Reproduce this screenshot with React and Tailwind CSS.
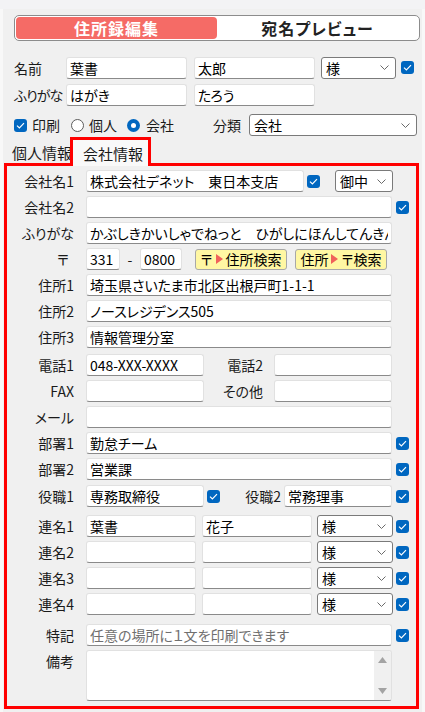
import React from 'react';

// Shared bits for the Windows-style form controls
function Check({ className = '' }) {
    return (
        <span className={`flex h-[13px] w-[13px] shrink-0 items-center justify-center rounded-[3px] bg-[#0067c0] ${className}`}>
            <svg width="9" height="7" viewBox="0 0 9 7">
                <path d="M1 3.6 3.4 6 8 1.2" fill="none" stroke="#ffffff" strokeWidth="1.2" />
            </svg>
        </span>
    );
}

function Radio({ checked, className = '' }) {
    return checked ? (
        <span className={`flex h-[13px] w-[13px] shrink-0 items-center justify-center rounded-full bg-[#0067c0] ${className}`}>
            <span className="h-[5px] w-[5px] rounded-full bg-white" />
        </span>
    ) : (
        <span className={`block h-[13px] w-[13px] shrink-0 rounded-full border border-[#5c5c5c] bg-white ${className}`} />
    );
}

function Field({ className = '', value = '', placeholder }) {
    return (
        <input
            readOnly
            value={value}
            placeholder={placeholder}
            className={`h-[22px] shrink-0 rounded-[3px] border border-[#e1e1e1] border-b-[#8a8a8a] bg-white px-[3px] text-[14px] text-black outline-none placeholder:text-[#6f6f6f] ${className}`}
        />
    );
}

function Select({ className = '', value }) {
    return (
        <div className={`flex h-[22px] shrink-0 items-center justify-between rounded-[3px] border border-[#7a7a7a] bg-white pl-[4px] pr-[6px] text-[14px] text-black ${className}`}>
            <span>{value}</span>
            <svg width="9" height="5" viewBox="0 0 9 5">
                <path d="M0.5 0.5 4.5 4.5 8.5 0.5" fill="none" stroke="#6a6a6a" strokeWidth="1" />
            </svg>
        </div>
    );
}

function Arrow() {
    return (
        <svg width="7" height="10" viewBox="0 0 7 10" className="mx-[3px]">
            <path d="M0 0 7 5 0 10Z" fill="#f0615a" />
        </svg>
    );
}

function Row({ label, className = '', top, children }) {
    return (
        <div className={`flex ${top ? 'items-start' : 'h-[22px] items-center'} ${className}`}>
            <div className={`w-[67px] shrink-0 text-right text-[14px] text-[#1a1a1a] ${top ? 'pt-[4px]' : ''}`}>{label}</div>
            <div className="ml-[12px] flex items-center">{children}</div>
        </div>
    );
}

export default function App() {
    return (
        <div className="flex h-[712px] w-[425px] flex-col overflow-hidden whitespace-nowrap bg-[#f0f0f0] font-['Noto_Sans_CJK_JP','Noto_Sans',sans-serif] leading-none text-[#1a1a1a] [font-feature-settings:'palt']">
            <div className="h-[9px] shrink-0 bg-[#f3f3f5]" />
            <div className="flex flex-1">
                <div className="w-[3px] bg-[#f8f8f8]" />
                <div className="flex flex-1 flex-col">
                    {/* Mode switch */}
                    <div className="ml-[11px] mr-[2px] mt-[6px] flex h-[26px] rounded-[5px] border border-[#8c8c8c] bg-white p-[1px]">
                        <div className="flex w-[201px] items-center justify-center rounded-[4px] bg-[#f56b66] text-[16px] font-bold tracking-[1px] text-white">住所録編集</div>
                        <div className="flex flex-1 items-center justify-center text-[16px] font-bold tracking-[1px] text-[#222]">宛名プレビュー</div>
                    </div>

                    {/* Name */}
                    <div className="ml-[11px] mt-[15px] flex h-[23px] items-center">
                        <div className="w-[52px] text-[14px]">名前</div>
                        <Field className="w-[121px]" value="葉書" />
                        <Field className="ml-[7px] w-[121px]" value="太郎" />
                        <Select className="ml-[6px] w-[75px]" value="様" />
                        <Check className="ml-[5px]" />
                    </div>
                    <div className="ml-[11px] mt-[5px] flex h-[22px] items-center">
                        <div className="w-[52px] text-[14px] tracking-[-1px]">ふりがな</div>
                        <Field className="w-[121px]" value="はがき" />
                        <Field className="ml-[7px] w-[121px]" value="たろう" />
                    </div>

                    {/* Print / type */}
                    <div className="ml-[11px] mt-[8px] flex h-[22px] items-center text-[14px]">
                        <div className="flex w-[199px] items-center">
                            <Check />
                            <span className="ml-[5px]">印刷</span>
                            <Radio className="ml-[11px]" />
                            <span className="ml-[5px]">個人</span>
                            <Radio checked className="ml-[10px]" />
                            <span className="ml-[6px]">会社</span>
                        </div>
                        <div className="w-[36px]">分類</div>
                        <Select className="w-[168px]" value="会社" />
                    </div>

                    {/* Tabs */}
                    <div className="ml-[1px] mt-[1px] flex h-[26px] items-start">
                        <div className="flex h-[26px] w-[66px] items-center pl-[8px] pt-[4px] text-[15px]">個人情報</div>
                        <div className="relative z-10 flex h-[29px] w-[81px] items-center border-[3px] border-b-0 border-[#ff0000] bg-[#f9f9f9] pl-[10px] text-[15px]">会社情報</div>
                    </div>

                    {/* Company panel */}
                    <div className="mb-[3px] ml-[1px] mr-[3px] flex flex-col gap-[4px] border-[3px] border-[#ff0000] pb-[5px] pt-[4px]">
                        <Row label="会社名1">
                            <Field className="w-[218px]" value="株式会社デネット　東日本支店" />
                            <Check className="ml-[3px]" />
                            <Select className="ml-[15px] w-[58px]" value="御中" />
                        </Row>
                        <Row label="会社名2">
                            <Field className="w-[306px]" />
                            <Check className="ml-[4px]" />
                        </Row>
                        <Row label="ふりがな">
                            <Field className="w-[306px]" value="かぶしきかいしゃでねっと　ひがしにほんしてんきんたい" />
                        </Row>
                        <Row label={<span className="pr-[5px]">〒</span>}>
                            <Field className="w-[34px]" value="331" />
                            <span className="flex w-[20px] justify-center text-[14px]">-</span>
                            <Field className="w-[42px]" value="0800" />
                            <button className="ml-[13px] flex h-[21px] w-[92px] items-center justify-center rounded-[3px] border border-[#a8a8a8] bg-[#fff7a3] text-[14px] text-black">
                                〒<Arrow />住所検索
                            </button>
                            <button className="ml-[8px] flex h-[21px] w-[92px] items-center justify-center rounded-[3px] border border-[#a8a8a8] bg-[#fff7a3] text-[14px] text-black">
                                住所<Arrow />〒検索
                            </button>
                        </Row>
                        <Row label="住所1">
                            <Field className="w-[306px]" value="埼玉県さいたま市北区出根戸町1-1-1" />
                        </Row>
                        <Row label="住所2">
                            <Field className="w-[306px]" value="ノースレジデンス505" />
                        </Row>
                        <Row label="住所3">
                            <Field className="w-[306px]" value="情報管理分室" />
                        </Row>
                        <Row label="電話1" className="mt-[2px]">
                            <Field className="w-[118px]" value="048-XXX-XXXX" />
                            <div className="w-[59px] text-right text-[14px]">電話2</div>
                            <Field className="ml-[11px] w-[118px]" />
                        </Row>
                        <Row label="FAX">
                            <Field className="w-[118px]" />
                            <div className="w-[59px] text-right text-[14px]">その他</div>
                            <Field className="ml-[11px] w-[118px]" />
                        </Row>
                        <Row label="メール">
                            <Field className="w-[306px]" />
                        </Row>
                        <Row label="部署1">
                            <Field className="w-[306px]" value="勤怠チーム" />
                            <Check className="ml-[4px]" />
                        </Row>
                        <Row label="部署2">
                            <Field className="w-[306px]" value="営業課" />
                            <Check className="ml-[4px]" />
                        </Row>
                        <Row label="役職1" className="mt-[1px]">
                            <Field className="w-[118px]" value="専務取締役" />
                            <Check className="ml-[3px]" />
                            <div className="w-[61px] text-right text-[14px]">役職2</div>
                            <Field className="ml-[3px] w-[108px]" value="常務理事" />
                            <Check className="ml-[4px]" />
                        </Row>
                        {[
                            ['連名1', '葉書', '花子'],
                            ['連名2', '', ''],
                            ['連名3', '', ''],
                            ['連名4', '', ''],
                        ].map(([label, a, b], i) => (
                            <Row key={label} label={label} className={i === 0 ? 'mt-[4px]' : ''}>
                                <Field className="w-[110px]" value={a} />
                                <Field className="ml-[6px] w-[110px]" value={b} />
                                <Select className="ml-[5px] w-[76px]" value="様" />
                                <Check className="ml-[3px]" />
                            </Row>
                        ))}
                        <Row label="特記" className="mt-[5px]">
                            <Field className="w-[306px]" placeholder="任意の場所に１文を印刷できます" />
                            <Check className="ml-[4px]" />
                        </Row>
                        <Row label="備考" top>
                            <div className="flex h-[51px] w-[306px] overflow-hidden rounded-[3px] border border-[#e1e1e1] border-b-[#8a8a8a] bg-white">
                                <div className="flex-1" />
                                <div className="flex w-[17px] flex-col items-center justify-between bg-[#f0f0f0] py-[6px]">
                                    <svg width="9" height="6" viewBox="0 0 9 6"><path d="M4.5 0 9 6 0 6Z" fill="#a3a3a3" /></svg>
                                    <svg width="9" height="6" viewBox="0 0 9 6"><path d="M0 0 9 0 4.5 6Z" fill="#a3a3a3" /></svg>
                                </div>
                            </div>
                        </Row>
                    </div>
                </div>
                <div className="w-[3px] bg-[#f8f8f8]" />
            </div>
        </div>
    );
}
